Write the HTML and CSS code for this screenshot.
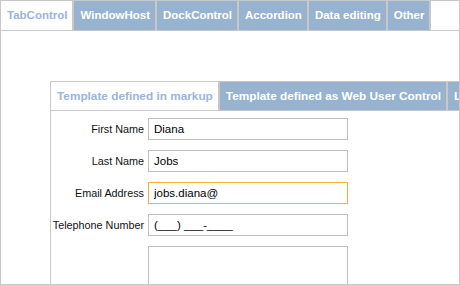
FILE: index.html
```html
<!DOCTYPE html>
<html lang="en">
<head>
  <meta charset="UTF-8" />
  <title>TabControl - Templates</title>
  <link rel="stylesheet" href="styles.css">
</head>
<body>

  <div class="frame">
    <!-- top level demo tabs -->
    <ul class="tabs">
      <li class="active">TabControl</li>
      <li>WindowHost</li>
      <li>DockControl</li>
      <li>Accordion</li>
      <li>Data editing</li>
      <li>Other</li>
    </ul>

    <div class="tab-body">
      <div class="inner">
        <ul class="tabs inner-tabs">
          <li class="active">Template defined in markup</li>
          <li>Template defined as Web User Control</li>
          <li>Lazy loaded template</li>
        </ul>

        <div class="form">
          <label for="first">First Name</label>
          <input id="first" type="text" value="Diana">

          <label for="last">Last Name</label>
          <input id="last" type="text" value="Jobs">

          <label for="email">Email Address</label>
          <input id="email" class="focused" type="text" value="jobs.diana@">

          <label for="phone">Telephone Number</label>
          <input id="phone" type="text" value="(___) ___-____">

          <span></span>
          <textarea></textarea>
        </div>
      </div>
    </div>
  </div>

</body>
</html>
```

FILE: styles.css
```css
body {
  margin: 0;
  font-family: "Liberation Sans", Arial, sans-serif;
  background-color: #fff;
}

.frame {
  box-sizing: border-box;
  width: 460px;
  height: 285px;
  border: 1px solid #c8c8c8;
  overflow: hidden;
}

.tabs {
  display: flex;
  margin: 0;
  padding: 0;
  list-style: none;
  border-bottom: 1px solid #c8c8c8;
}

.tabs li {
  flex-shrink: 0;
  height: 29px;
  line-height: 29px;
  padding: 0 5px 0 6px;
  font-size: 11.5px;
  font-weight: bold;
  color: #fff;
  background-color: #97b3d0;
  border-right: 2px solid #c8c8c8;
  white-space: nowrap;
}

.tabs li.active {
  background-color: #fff;
  color: #9ab4da;
}

.tab-body {
  padding: 50px 0 0 49px;
}

.inner {
  width: 600px;
  height: 260px;
  border: 1px solid #c8c8c8;
}

.inner-tabs li {
  height: 28px;
  line-height: 28px;
  font-size: 11.8px;
}

.form {
  display: grid;
  grid-template-columns: 93px 200px;
  column-gap: 4px;
  row-gap: 10px;
  align-items: center;
  padding-top: 7px;
}

.form label {
  text-align: right;
  font-size: 10.8px;
  color: #111;
}

.form input,
.form textarea {
  box-sizing: border-box;
  width: 200px;
  height: 22px;
  margin: 0;
  padding: 0 5px;
  border: 1px solid #bfbfbf;
  font-family: "Liberation Sans", Arial, sans-serif;
  font-size: 11.5px;
  color: #000;
  outline: none;
}

.form input.focused {
  border-color: #f3b13a;
}

.form textarea {
  height: 60px;
  resize: none;
}
```
